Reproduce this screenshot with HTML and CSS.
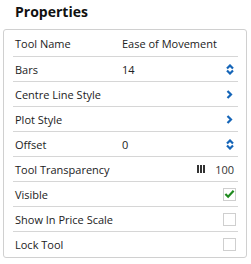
FILE: index.html
```html
<!DOCTYPE html>
<html lang="en">
<head>
    <meta charset="UTF-8">
    <title>Properties</title>
    <link rel="stylesheet" href="styles.css">
</head>
<body>
    <h1 class="title">Properties</h1>
    <div class="panel">
        <div class="row">
            <span class="label">Tool Name</span>
            <span class="value">Ease of Movement</span>
        </div>
        <div class="row">
            <span class="label">Bars</span>
            <span class="value">14</span>
            <svg class="spin" width="8" height="11" viewBox="0 0 8 11">
                <path d="M1 4.5 L4 1.5 L7 4.5 M1 6.5 L4 9.5 L7 6.5" fill="none" stroke="#1565b8" stroke-width="2.2"/>
            </svg>
        </div>
        <div class="row">
            <span class="label">Centre Line Style</span>
            <svg class="chev" width="7" height="9" viewBox="0 0 7 9">
                <path d="M1.5 1 L5 4.5 L1.5 8" fill="none" stroke="#1565b8" stroke-width="2.2"/>
            </svg>
        </div>
        <div class="row">
            <span class="label">Plot Style</span>
            <svg class="chev" width="7" height="9" viewBox="0 0 7 9">
                <path d="M1.5 1 L5 4.5 L1.5 8" fill="none" stroke="#1565b8" stroke-width="2.2"/>
            </svg>
        </div>
        <div class="row">
            <span class="label">Offset</span>
            <span class="value">0</span>
            <svg class="spin" width="8" height="11" viewBox="0 0 8 11">
                <path d="M1 4.5 L4 1.5 L7 4.5 M1 6.5 L4 9.5 L7 6.5" fill="none" stroke="#1565b8" stroke-width="2.2"/>
            </svg>
        </div>
        <div class="row">
            <span class="label">Tool Transparency</span>
            <span class="bars"><i></i><i></i><i></i></span>
            <span class="amount">100</span>
        </div>
        <div class="row">
            <span class="label">Visible</span>
            <span class="check">
                <svg width="12" height="12" viewBox="0 0 12 12">
                    <path d="M1.5 6 L4.5 9 L10.5 2.5" fill="none" stroke="#1f8a1f" stroke-width="2.4"/>
                </svg>
            </span>
        </div>
        <div class="row">
            <span class="label">Show In Price Scale</span>
            <span class="check"></span>
        </div>
        <div class="row last">
            <span class="label">Lock Tool</span>
            <span class="check"></span>
        </div>
    </div>
</body>
</html>
```

FILE: styles.css
```css
body {
    margin: 0;
    font-family: 'Open Sans', 'Noto Sans', sans-serif;
    color: #222;
    background: #fff;
}
.title {
    font-size: 14px;
    font-weight: 700;
    color: #111;
    margin: 0;
    padding: 2px 0 0 15px;
    height: 29px;
    line-height: 20px;
    box-sizing: border-box;
}
.panel {
    margin-left: 3px;
    width: 244px;
    box-sizing: border-box;
    border: 1px solid #d0d0d0;
    border-radius: 3px;
    padding: 1px 8px 1px 9px;
}
.row {
    display: flex;
    align-items: center;
    height: 24px;
    border-bottom: 1px solid #d6d6d6;
    padding: 0 4px 0 2px;
    font-size: 11px;
}
.row:first-child {
    height: 25px;
}
.row.last {
    border-bottom: none;
}
.label {
    width: 107px;
    flex-shrink: 0;
}
.value {
    flex: 1;
}
.spin, .chev {
    margin-left: auto;
}
.chev {
    margin-right: 1px;
}
.bars {
    margin-left: auto;
    display: flex;
    gap: 1px;
    height: 8px;
    margin-right: 10px;
}
.bars i {
    width: 2px;
    height: 8px;
    background: #333;
}
.amount {
    color: #333;
}
.check {
    margin-left: auto;
    margin-right: -2px;
    width: 11px;
    height: 11px;
    border: 1px solid #cfcfcf;
    display: flex;
    align-items: center;
    justify-content: center;
}
.check svg {
    margin-top: -1px;
}
```
